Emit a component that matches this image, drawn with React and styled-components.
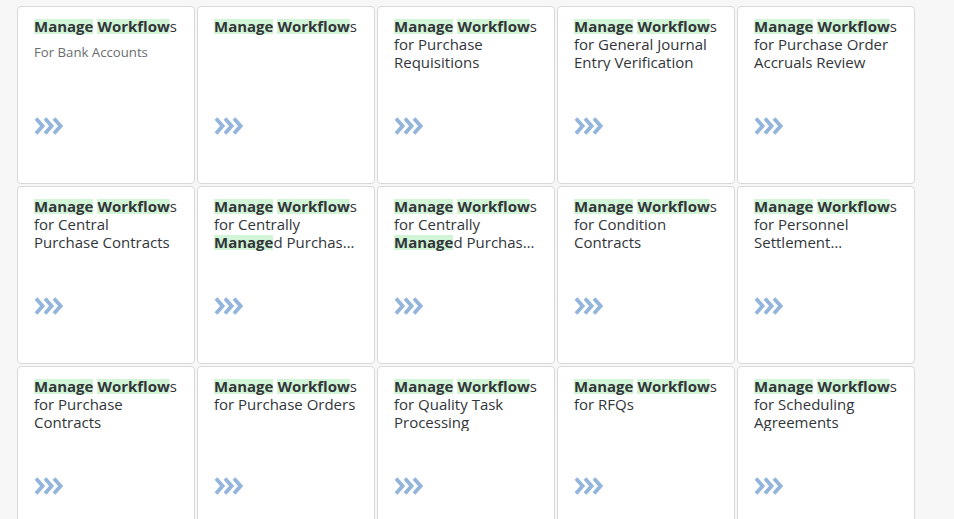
import React from "react";
import styled, { createGlobalStyle } from "styled-components";

const Global = createGlobalStyle`
  html, body { margin: 0; padding: 0; background: #f7f7f7; }
  body { font-family: "Open Sans", "Noto Sans", Arial, sans-serif; }
`;

const Grid = styled.div`
  display: grid;
  grid-template-columns: repeat(5, 178px);
  grid-auto-rows: 178px;
  gap: 2px;
  padding: 6px 0 0 17px;
`;

const Tile = styled.div`
  box-sizing: border-box;
  background: #fff;
  border: 1px solid #d9d9d9;
  border-radius: 4px;
  padding: 10px 16px 0 16px;
  display: flex;
  flex-direction: column;
  overflow: hidden;
`;

const Header = styled.div`
  height: 90px;
  display: flex;
  flex-direction: column;
`;

const Title = styled.div`
  font-size: 15px;
  line-height: 18px;
  color: #32363a;
  white-space: pre-line;
  display: -webkit-box;
  -webkit-line-clamp: 3;
  -webkit-box-orient: vertical;
  overflow: hidden;
`;

const Mark = styled.span`
  font-weight: 700;
  background: linear-gradient(#d3f5d7, #d3f5d7) no-repeat center / 100% 15px;
`;

const Subtitle = styled.div`
  margin-top: 9px;
  font-size: 13.2px;
  line-height: 16px;
  color: #6a6d70;
`;

const Footer = styled.div`
  margin-top: 10px;
  display: flex;
`;

const Chevrons = () => (
  <svg width="29" height="18" viewBox="0 0 29 18">
    <g fill="none" stroke="#93b5dc" strokeWidth="3.8" strokeLinejoin="miter" strokeLinecap="butt">
      <polyline points="2,1.5 8.6,9 2,16.5" />
      <polyline points="11,1.5 17.6,9 11,16.5" />
      <polyline points="20,1.5 26.6,9 20,16.5" />
    </g>
  </svg>
);

const Highlighted = ({ text }) => {
  const parts = [];
  const re = /(Manage|Workflow)/g;
  let last = 0;
  let m;
  let i = 0;
  while ((m = re.exec(text))) {
    if (m.index > last) parts.push(<span key={i++}>{text.slice(last, m.index)}</span>);
    parts.push(<Mark key={i++}>{m[0]}</Mark>);
    last = m.index + m[0].length;
  }
  if (last < text.length) parts.push(<span key={i++}>{text.slice(last)}</span>);
  return parts;
};

const tiles = [
  { t: "Manage Workflows", s: "For Bank Accounts" },
  { t: "Manage Workflows" },
  { t: "Manage Workflows for Purchase Requisitions" },
  { t: "Manage Workflows for General Journal Entry Verification" },
  { t: "Manage Workflows for Purchase Order Accruals Review" },
  { t: "Manage Workflows for Central\nPurchase Contracts" },
  { t: "Manage Workflows for Centrally Managed Purchase Contracts" },
  { t: "Manage Workflows for Centrally Managed Purchase Requisitions" },
  { t: "Manage Workflows for Condition Contracts" },
  { t: "Manage Workflows for Personnel Settlement Documents" },
  { t: "Manage Workflows for Purchase Contracts" },
  { t: "Manage Workflows for Purchase Orders" },
  { t: "Manage Workflows for Quality Task Processing" },
  { t: "Manage Workflows for RFQs" },
  { t: "Manage Workflows for Scheduling Agreements" },
];

export default function App() {
  return (
    <>
      <Global />
      <Grid>
        {tiles.map((x, i) => (
          <Tile key={i}>
            <Header>
              <Title>
                <Highlighted text={x.t} />
              </Title>
              {x.s && <Subtitle>{x.s}</Subtitle>}
            </Header>
            <Footer>
              <Chevrons />
            </Footer>
          </Tile>
        ))}
      </Grid>
    </>
  );
}
